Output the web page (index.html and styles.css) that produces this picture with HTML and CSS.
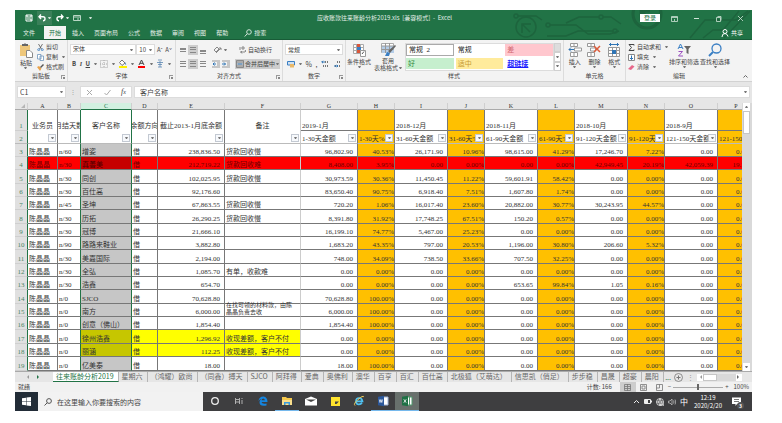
FILE: index.html
```
<!DOCTYPE html>
<html lang="zh-CN">
<head>
  <meta charset="UTF-8">
  <title>应收账款往来账龄分析2019.xls - Excel</title>
  <meta name="viewport" content="width=device-width, initial-scale=1">
  <link rel="stylesheet" href="styles.css">
</head>
<body>
  <header class="topbar">
    <svg class="circuit" width="250" height="29" viewBox="0 0 250 29" fill="none" stroke="#1d643d" stroke-width="1.500">
      <circle cx="14" cy="6" r="2"/><path d="M16 6h18l6 4"/>
      <circle cx="24" cy="17" r="10"/><path d="M20 23v-9h9M20 14l8 8"/>
      <circle cx="46" cy="15" r="2"/><path d="M48 15h26l12 9h22l9-3"/>
      <circle cx="99" cy="7" r="2"/><path d="M97 7H77L64 13M101 7h8l10 7"/>
      <circle cx="113" cy="21" r="2"/><path d="M111 21H76l-12 5H45"/>
      <circle cx="145" cy="4" r="14" stroke-width="3"/><path d="M139 11V1h9M139 1l10 10" stroke-width="3"/>
      <path d="M188 28l15-18h31l12-9M201 28l10-8h10l16-19M222 28l26-27"/>
    </svg>
    <div class="titlebar">
      <div class="quick">
        <button aria-label="保存"><svg width="8" height="8" viewBox="0 0 8 8" fill="none" stroke="#fff"><path d="M1 1h6v6H1zM2 5h4v2M2 1v2h4V1"/></svg></button>
        <button class="undo" aria-label="撤消"><svg width="8" height="8" viewBox="0 0 8 8" fill="none" stroke="#fff" stroke-width="1.4"><path d="M3 .5L1 2.7 3 5M1 2.7h4q2 0 2 2t-2 2"/></svg><i class="caret"></i></button>
        <button aria-label="恢复"><svg width="8" height="8" viewBox="0 0 8 8" fill="none" stroke="#fff" stroke-width="1.4"><path d="M5 .5l2 2.2L5 5M7 2.7H3q-2 0-2 2t2 2"/></svg><i class="caret"></i></button>
        <button aria-label="表单"><svg width="8" height="8" viewBox="0 0 8 8" fill="none" stroke="#b9d6c5"><path d="M.5 1.5h7v5h-7zM.5 3h7M4 5h2"/></svg></button>
        <button class="custom" aria-label="自定义"><i class="caret"></i></button>
      </div>
      <h1>应收账款往来账龄分析2019.xls&nbsp; [兼容模式]&nbsp; -&nbsp; Excel</h1>
      <div class="window-buttons">
        <button class="login">登录</button>
        <button aria-label="功能区"><svg width="7" height="7" viewBox="0 0 7 7" fill="none" stroke="#cfe3d7"><path d="M.5 1.5h6v5h-6zM.5 2.5h6M3.500 6V4" stroke-width=".8"/></svg></button>
        <button aria-label="最小化"><svg width="7" height="7" viewBox="0 0 7 7" stroke="#cfe3d7"><path d="M1 3.5h5"/></svg></button>
        <button aria-label="还原"><svg width="7" height="7" viewBox="0 0 7 7" fill="none" stroke="#cfe3d7"><path d="M1.500 2.500h4v4h-4zM2.500 1.500h3.500v4" stroke-width=".8"/></svg></button>
        <button aria-label="关闭"><svg width="7" height="7" viewBox="0 0 7 7" stroke="#cfe3d7"><path d="M1 1l5 5M6 1L1 6" stroke-width=".8"/></svg></button>
      </div>
    </div>
    <nav class="tabs">
      <a href="#">文件</a>
      <a href="#" class="active">开始</a>
      <a href="#">插入</a>
      <a href="#">页面布局</a>
      <a href="#">公式</a>
      <a href="#">数据</a>
      <a href="#">审阅</a>
      <a href="#">视图</a>
      <a href="#">帮助</a>
      <a href="#" class="find"><svg width="8" height="8" viewBox="0 0 8 8" fill="none" stroke="#cfe3d7"><circle cx="5" cy="3" r="2.300"/><path d="M3.300 4.700L.7 7.500"/></svg>搜索</a>
      <a href="#" class="share"><svg width="8" height="8" viewBox="0 0 8 8" fill="none" stroke="#fff"><circle cx="4" cy="2.500" r="2"/><path d="M1 8q0-3.500 3-3.500 2 0 3 3"/></svg>共享</a>
    </nav>
  </header>

  <section class="ribbon">
    <div class="group clipboard">
      <div class="group-body">
        <button class="big"><svg width="14" height="15" viewBox="0 0 14 15"><path d="M1 2h10v11H1z" fill="#eec77b"/><path d="M3 3V1h2q1-1.500 2 0h2v2z" fill="#666"/><path d="M7.500 7.500h3.500l2.500 2.500v4.500h-6z" fill="#fff" stroke="#888"/></svg>粘贴<i class="caret"></i></button>
        <div class="stack">
          <button><svg width="7" height="7" viewBox="0 0 7 7" fill="none" stroke="#555" stroke-width=".8"><path d="M1.500 0l3 5M5.500 0l-3 5"/><circle cx="1.700" cy="5.700" r="1" stroke="#3a7fc4"/><circle cx="5.300" cy="5.700" r="1" stroke="#3a7fc4"/></svg>剪切</button>
          <button><svg width="7" height="7" viewBox="0 0 7 7" fill="#fff" stroke="#6f95bb" stroke-width=".8"><path d="M.5.5h3.500v4.500H.5zM3 2h3.500v4.500H3z"/></svg>复制<i class="caret"></i></button>
          <button><svg width="7" height="7" viewBox="0 0 7 7"><path d="M0 3l2-1 2.500 2.500L3 7z" fill="#e9a34c"/><path d="M3 3l3-3 1 1-3 3z" fill="#555"/></svg>格式刷</button>
        </div>
      </div>
      <div class="group-name">剪贴板<i class="launcher"></i></div>
    </div>

    <div class="group font">
      <div class="group-body rows">
        <div class="tools">
          <label class="drop face"><select aria-label="字体"><option>宋体</option></select><i class="caret"></i></label>
          <label class="drop size"><select aria-label="字号"><option>10</option></select><i class="caret"></i></label>
          <button class="grow">A<sup>ˆ</sup></button>
          <button class="grow">A<sup>ˇ</sup></button>
        </div>
        <div class="tools spread">
          <button class="bold">B</button>
          <button class="italic">I</button>
          <button class="under">U</button><i class="caret"></i>
          <button aria-label="边框"><svg width="8" height="8" viewBox="0 0 8 8" fill="none" stroke="#aaa" stroke-dasharray="1 1"><path d="M.5.5h7v7h-7zM4 0v8M0 4h8"/></svg></button><i class="caret"></i>
          <button aria-label="填充颜色"><svg width="9" height="9" viewBox="0 0 9 9"><path d="M1.500 3.500L4 1l3 3-3 2.500z" fill="#fff" stroke="#777"/><path d="M7 3l1.300 2.500H7z" fill="#3a7fc4"/><path d="M1 7h8v2H1z" fill="#fff000"/></svg></button><i class="caret"></i>
          <button aria-label="字体颜色"><svg width="9" height="9" viewBox="0 0 9 9"><path d="M2 6l2.500-5L7 6M3 4.300h3" fill="none" stroke="#444"/><path d="M1 7h7v2H1z" fill="red"/></svg></button><i class="caret"></i>
          <button aria-label="拼音"><svg width="8" height="9" viewBox="0 0 8 9" fill="none" stroke="#5b87b3"><path d="M2 1h4M1 3.500h6M4 2v6M2 5.500h4M2 8h4" stroke-width=".8"/></svg></button><i class="caret"></i>
        </div>
      </div>
      <div class="group-name">字体<i class="launcher"></i></div>
    </div>

    <div class="group align">
      <div class="group-body rows">
        <div class="tools">
          <button aria-label="顶端对齐"><i class="lines top"></i></button>
          <button class="on" aria-label="垂直居中"><i class="lines"></i></button>
          <button aria-label="底端对齐"><i class="lines low"></i></button>
          <button class="orient" aria-label="方向"><svg width="9" height="9" viewBox="0 0 9 9" fill="none" stroke="#888"><path d="M1 5l3-3 2 2-3 3zM3 8l5-5M8 5V3H6"/></svg><i class="caret"></i></button>
          <button class="wrap"><svg width="8" height="8" viewBox="0 0 8 8" fill="none" stroke="#888"><path d="M1 1v3M3 1h2v2H3zM1 6h5q1.500-1 0-2M3 5L2 6l1 1.500"/></svg>自动换行</button>
        </div>
        <div class="tools">
          <button aria-label="左对齐"><i class="lines"></i></button>
          <button class="on" aria-label="居中"><i class="lines"></i></button>
          <button aria-label="右对齐"><i class="lines"></i></button>
          <button class="indent" aria-label="减少缩进"><svg width="8" height="8" viewBox="0 0 8 8" fill="none"><path d="M0 1h8M5 3h3M5 5h3M0 7h8" stroke="#999"/><path d="M4 4H1M2.500 2.500L1 4l1.500 1.500" stroke="#2f75b5"/></svg></button>
          <button aria-label="增加缩进"><svg width="8" height="8" viewBox="0 0 8 8" fill="none"><path d="M0 1h8M5 3h3M5 5h3M0 7h8" stroke="#999"/><path d="M0 4h3.500M2 2.500L3.500 4 2 5.500" stroke="#2f75b5"/></svg></button>
          <button class="merge on"><svg width="8" height="8" viewBox="0 0 8 8" fill="none" stroke="#777"><path d="M.5 7.500v-7h7v7zM.5 2h7M.5 6h7" stroke-width=".8"/><path d="M1.500 4h5" stroke="#2f75b5"/></svg>合并后居中<i class="caret"></i></button>
        </div>
      </div>
      <div class="group-name">对齐方式<i class="launcher"></i></div>
    </div>

    <div class="group number">
      <div class="group-body rows">
        <div class="tools">
          <label class="drop format"><select aria-label="数字格式"><option>常规</option></select><i class="caret"></i></label>
        </div>
        <div class="tools spread">
          <button aria-label="会计格式"><svg width="8" height="8" viewBox="0 0 8 8"><path d="M.5 1.500h7V5h-7z" fill="#cfe0f0" stroke="#3a7fc4"/><path d="M3 4h4v3.500H3z" fill="#e9b868"/></svg></button><i class="caret"></i>
          <button class="percent">%</button>
          <button class="percent">,</button>
          <button aria-label="增加小数位"><svg width="8" height="8" viewBox="0 0 8 8" fill="none" stroke="#777"><path d="M4.500 1v2M6.500 1v2M2.500 5v2M4.500 5v2M6.500 5v2"/><path d="M4 2H.7M2 .8L.8 2 2 3.200" stroke="#2f75b5"/></svg></button>
          <button aria-label="减少小数位"><svg width="8" height="8" viewBox="0 0 8 8" fill="none" stroke="#777"><path d="M2.500 5v2M4.500 1v2M6.500 1v2M6.500 5v2"/><path d="M1 6h4M3.800 4.800L5 6 3.800 7.200" stroke="#2f75b5"/></svg></button>
        </div>
      </div>
      <div class="group-name">数字<i class="launcher"></i></div>
    </div>

    <div class="group styles">
      <div class="group-body">
        <button class="big"><svg width="15" height="14" viewBox="0 0 15 14"><path d="M1.500 1.500h10v9h-10zM1.500 4.500h10M1.500 7.500h10M4.500 1v10M8.500 1v10" fill="#fff" stroke="#aaa"/><path d="M5 1h3v3H5zM5 7h3v3H5z" fill="#d9563a"/><path d="M5 4h4v3H5z" fill="#3a7fc4"/><path d="M8.500 7.500h5v6h-5z" fill="#fff" stroke="#999"/><path d="M10 11l2-2.500" stroke="#555"/></svg>条件格式<i class="caret"></i></button>
        <button class="big table-style"><svg width="15" height="14" viewBox="0 0 15 14"><path d="M.5.500h12v9H.5z" fill="#fff" stroke="#aaa"/><path d="M1 3h12v7H1z" fill="#b4cde8"/><path d="M.5 3h12M.5 6.500h12M4.500 0v10M8.500 0v10" stroke="#999"/><path d="M7 8l7-6 1 1-6 7z" fill="#666"/><path d="M4 13l2-4 3 1-1 3z" fill="#3a7fc4"/></svg>套用<span>表格格式<i class="caret"></i></span></button>
        <div class="gallery">
          <button class="picked">常规&nbsp; 2</button>
          <button>常规</button>
          <button class="bad">差</button>
          <button class="good">好</button>
          <button class="neutral">适中</button>
          <button class="link">超链接</button>
        </div>
        <div class="gallery-nav">
          <button class="off" aria-label="上一行"></button>
          <button aria-label="下一行"><i class="caret"></i></button>
          <button aria-label="其他"><i class="caret"></i></button>
        </div>
      </div>
      <div class="group-name">样式</div>
    </div>

    <div class="group cells">
      <div class="group-body">
        <button class="big"><svg width="14" height="14" viewBox="0 0 14 14" fill="#fff" stroke="#999"><path d="M2.500.5h7v3h-7zM6 .5v3M2.500 9.500h7v4h-7zM6 9.500v4M6.500 5h7v3h-7z"/><path d="M6 6.500H1M3 4.500l-2 2 2 2" fill="none" stroke="#2f75b5"/></svg>插入<i class="caret"></i></button>
        <button class="big"><svg width="14" height="14" viewBox="0 0 14 14" fill="#fff" stroke="#999"><path d="M.5.500h7v3h-7zM4 .5v3M.5 9.500h7v4h-7zM4 9.500v4M3.500 5h5v3h-5z"/><path d="M7 3l6 6M13 3L7 9" stroke="#dc5b39" stroke-width="1.500"/></svg>删除<i class="caret"></i></button>
        <button class="big"><svg width="14" height="14" viewBox="0 0 14 14" fill="#fff" stroke="#999"><path d="M1.500 4.500h11v9h-11zM1.500 7.500h11M1.500 10.500h11M5.500 4v10M9.500 4v10"/><path d="M5 7h4v4H5z" fill="#2f75b5" stroke="none"/><path d="M2 1.500h10M3.500 0v3M10.500 0v3" stroke="#2f75b5"/></svg>格式<i class="caret"></i></button>
      </div>
      <div class="group-name">单元格</div>
    </div>

    <div class="group edit">
      <div class="group-body">
        <div class="stack">
          <button><svg width="7" height="7" viewBox="0 0 7 7" fill="none" stroke="#444"><path d="M6 1.500v-1H1l2.500 3L1 6.500h5v-1"/></svg>自动求和<i class="caret"></i></button>
          <button><svg width="7" height="7" viewBox="0 0 7 7" fill="#fff" stroke="#888"><path d="M.5.500h6v6h-6z"/><path d="M3.500 1.500v4M2 4l1.500 1.500L5 4" stroke="#2f75b5"/></svg>填充<i class="caret"></i></button>
          <button><svg width="7" height="7" viewBox="0 0 7 7"><path d="M0 5l4-4 2.500 1.500L3 6z" fill="#e8688a"/></svg>清除<i class="caret"></i></button>
        </div>
        <button class="big"><svg width="14" height="14" viewBox="0 0 14 14" fill="none"><path d="M1 6l2.500-5L6 6M2 4.500h3" stroke="#3a7fc4"/><path d="M1.500 8.500h4l-4 4.500h4.500" stroke="#9b4fc0"/><path d="M7 3h7l-2.500 3v5l-2-1V6z" fill="#666"/></svg>排序和筛选<i class="caret"></i></button>
        <button class="big"><svg width="14" height="14" viewBox="0 0 14 14" fill="none" stroke="#3a7fc4"><circle cx="8.500" cy="5.500" r="4.500" stroke-width="1.300"/><path d="M5 9l-4 4" stroke-width="2"/></svg>查找和选择<i class="caret"></i></button>
      </div>
      <div class="group-name">编辑<button class="collapse" aria-label="折叠功能区"><svg width="5" height="3" viewBox="0 0 5 3" fill="none" stroke="#666"><path d="M.5 2.500l2-2 2 2"/></svg></button></div>
    </div>
  </section>

  <section class="formula-bar">
    <label class="drop name-box"><input type="text" value="C1" aria-label="名称框"><i class="caret"></i></label>
    <i class="grip">⋮</i>
    <div class="formula-buttons">
      <button aria-label="取消"><svg width="7" height="7" viewBox="0 0 7 7" stroke="#aaa"><path d="M1 1l5 5M6 1L1 6"/></svg></button>
      <button aria-label="输入"><svg width="7" height="7" viewBox="0 0 7 7" fill="none" stroke="#aaa"><path d="M.5 4l2 2 4-5"/></svg></button>
      <button class="fx">f<sub>x</sub></button>
    </div>
    <label class="drop formula"><input type="text" value="客户名称" aria-label="编辑栏"><i class="caret"></i></label>
  </section>

  <main class="workspace">
    <div class="sheet">
      <table>
        <colgroup id="cols"></colgroup>
        <thead id="head"></thead>
        <tbody id="rows"></tbody>
      </table>
    </div>
    <div class="vscroll">
      <button aria-label="向上滚动"><i class="caret up"></i></button>
      <div class="thumb"></div>
      <button class="down" aria-label="向下滚动"><i class="caret"></i></button>
    </div>
  </main>

  <nav class="sheet-tabs">
    <div class="arrows"><i class="left"></i><i class="right"></i></div>
    <div class="sheet-list" id="sheetList"></div>
    <span class="more">...</span>
    <button class="add" aria-label="新工作表"><svg width="9" height="9" viewBox="0 0 9 9" fill="none" stroke="#777"><circle cx="4.500" cy="4.500" r="4" stroke-width=".8"/><path d="M2.500 4.500h4M4.500 2.500v4"/></svg></button>
    <i class="grip">⋮</i>
    <div class="hscroll">
      <button aria-label="向左滚动"><i class="left"></i></button>
      <div class="thumb"></div>
      <button class="end" aria-label="向右滚动"><i class="right"></i></button>
    </div>
  </nav>

  <div class="status">
    <span>就绪</span>
    <span class="count">计数: 166</span>
    <button class="on" aria-label="普通"><svg width="7" height="7" viewBox="0 0 7 7" fill="none" stroke="#777"><path d="M.5.500h6v6h-6zM.5 2.500h6M.5 4.500h6M3.500 0v7" stroke-width=".8"/></svg></button>
    <button aria-label="页面布局"><svg width="7" height="7" viewBox="0 0 7 7" fill="none" stroke="#777"><path d="M.5.500h6v6h-6zM2 2h3v3H2z" stroke-width=".8"/></svg></button>
    <button aria-label="分页预览"><svg width="7" height="7" viewBox="0 0 7 7" fill="none" stroke="#777"><path d="M.5.500h6v6h-6zM.5 4h3V.5" stroke-width=".8"/></svg></button>
    <div class="zoom">
      <button aria-label="缩小">−</button>
      <input type="range" min="0" max="100" value="50" aria-label="显示比例">
      <button aria-label="放大">+</button>
      <span>100%</span>
    </div>
  </div>

  <footer class="taskbar">
    <button class="start" aria-label="开始"><svg width="9" height="9" viewBox="0 0 9 9" fill="#fff"><path d="M0 1.200L4 .7v3.500H0zM4.500.6L9 0v4.200H4.500zM0 4.800h4v3.500L0 7.800zM4.500 4.800H9V9l-4.500-.6z"/></svg></button>
    <label class="search">
      <svg width="8" height="8" viewBox="0 0 8 8" fill="none" stroke="#555"><circle cx="5" cy="3" r="2.400"/><path d="M3.300 4.700L.5 7.500"/></svg>
      <input type="text" placeholder="在这里输入你要搜索的内容">
    </label>
    <div class="apps">
      <button aria-label="Cortana"><svg width="12" height="12" viewBox="0 0 12 12" fill="none" stroke="#eee" stroke-width="1.300"><circle cx="6" cy="6" r="3.300"/></svg></button>
      <button aria-label="任务视图"><svg width="12" height="12" viewBox="0 0 12 12" fill="none" stroke="#ccc" stroke-width=".8"><path d="M2.500 3v1.500h4V3M2.500 9V7h4v2M2.500 4.500V7M6.500 4.500V7M9 3v1M9 5v4"/></svg></button>
      <button aria-label="Edge"><svg width="12" height="12" viewBox="0 0 12 12"><path d="M1.500 6Q2 1.500 6.500 1.500q4 .5 4 5.500H4.500q.5 2.500 5 1.500v2q-7 1.500-7-3.500 0-2 2-3Q2.500 4 1.500 6zM4.500 5.300h3.500Q7.500 3.500 6.200 3.500t-1.700 1.800z" fill="#1585e0"/></svg></button>
      <button class="open" aria-label="文件资源管理器"><svg width="12" height="12" viewBox="0 0 12 12"><path d="M1 2h4l1 1h5v7H1z" fill="#f5c84c"/><path d="M1 5h10v5H1z" fill="#fbdf8d"/><path d="M3 7h6v3H7.500V8.500h-3V10H3z" fill="#3a9bdc"/></svg></button>
      <button aria-label="邮件"><svg width="12" height="12" viewBox="0 0 12 12"><path d="M0 4l6-2.500L12 4v6.500H0z" fill="#fff"/><path d="M1 4.500h10L6 7z" fill="#444"/></svg></button>
      <button aria-label="便笺"><svg width="12" height="12" viewBox="0 0 12 12"><path d="M2 2h9v9H2z" fill="#ffe32e"/><path d="M6 6.500h4L7.500 9H6z" fill="#444"/></svg></button>
      <button aria-label="Internet Explorer"><svg width="12" height="12" viewBox="0 0 12 12" fill="none"><path d="M3 6.300h6.500Q9 3 6 3T3 6.300t3 3q2 0 3-1.500" stroke="#4fc0f0" stroke-width="1.700"/><path d="M2 10.500Q0 9 5 4.500T11 2" stroke="#f3d15a"/></svg></button>
      <button class="open" aria-label="Word"><svg width="12" height="12" viewBox="0 0 12 12"><path d="M6 2h5v8H6z" fill="#fff" stroke="#9fb4d8"/><path d="M1 1.800l6-1v10.400l-6-1z" fill="#2b579a"/><path d="M2.300 4.500l.7 3 .9-3 .9 3 .7-3" fill="none" stroke="#fff" stroke-width=".7"/></svg></button>
      <button class="open current" aria-label="Excel"><svg width="12" height="12" viewBox="0 0 12 12"><path d="M6 2h5v8H6zM8.500 2v8" fill="#fff" stroke="#4f9b6d"/><path d="M1 1.800l6-1v10.400l-6-1z" fill="#1e7145"/><path d="M2.800 4.300l2.400 3.400M5.200 4.300L2.800 7.700" stroke="#fff" stroke-width=".8"/></svg></button>
    </div>
    <div class="tray">
      <svg width="7" height="7" viewBox="0 0 7 7" fill="none" stroke="#eee"><path d="M1 5l2.500-2.500L6 5"/></svg>
      <svg width="8" height="7" viewBox="0 0 8 7" fill="none" stroke="#eee"><path d="M.5 1.500h6v4h-6z"/><path d="M1 3.500h3" stroke-width="3"/><path d="M7.500 2.500v2"/></svg>
      <svg width="8" height="8" viewBox="0 0 8 8" fill="none" stroke="#eee" stroke-width=".8"><circle cx="4" cy="4" r="3.500"/><path d="M.5 4h7M4 .5q-3 3.500 0 7M4 .5q3 3.500 0 7M5 6h3v2H5z"/></svg>
      <svg width="8" height="8" viewBox="0 0 8 8" fill="none" stroke="#bbb" stroke-width=".8"><path d="M.5 3h1.500l2-2v6L2 5H.5zM5.500 2.500q1 1.500 0 3M7 1.500q1.500 2.500 0 5"/></svg>
      <span class="ime">中</span>
      <time>12:19<br>2020/2/20</time>
      <button class="notice" aria-label="3 条新通知"><svg width="9" height="9" viewBox="0 0 9 9"><path d="M0 .5h9v6.500H5L3.500 9V7H0z" fill="#fff"/><path d="M2 2.500h5M2 4.500h5" stroke="#555" stroke-width=".8"/></svg><b>3</b></button>
    </div>
  </footer>

  <script src="script.js"></script>
</body>
</html>
```
FILE: styles.css
```
:root {
  --green: #217346;
  --ribbon: #f3f3f3;
  --chrome: #e6e6e6;
  --line: #777;
  --orange: #ffc000;
  --sans: "Noto Sans CJK SC", sans-serif;
  --serif: "Liberation Serif", "Noto Sans CJK SC", serif;
}

* {
  margin: 0;
  padding: 0;
  box-sizing: border-box;
}

body {
  font-family: var(--sans);
  font-size: 6px;
  line-height: 8px;
  color: #444;
  background: white;
  height: 100vh;
  padding: 10px 30px 12px 15px;
  display: flex;
  flex-direction: column;
  overflow: hidden;
}

button, input, select {
  font: inherit;
  color: inherit;
  border: none;
  background: none;
  border-radius: 0;
  outline: none;
  appearance: none;
}

button {
  display: flex;
  align-items: center;
  justify-content: center;
  white-space: nowrap;
}

svg {
  display: block;
  flex-shrink: 0;
}

a {
  color: inherit;
  text-decoration: none;
}

.caret {
  display: block;
  flex-shrink: 0;
  border: 1px solid transparent;
  border-top: 2px solid #777;
  border-bottom: none;
  width: 3px;
}

.caret.up {
  transform: rotate(180deg);
}

/* title bar and tabs */
.topbar {
  position: relative;
  background: var(--green);
  color: #e4efe8;
  border-bottom: 1px solid #185c37;
}

.circuit {
  position: absolute;
  top: 0;
  right: 0;
}

.titlebar,
.tabs {
  position: relative;
  display: flex;
}

.titlebar {
  height: 16px;
  align-items: center;
  justify-content: space-between;
}

.quick {
  display: flex;
  align-items: center;
  flex: 1;
  padding-left: 10px;
  gap: 4px;
}

.quick button {
  gap: 2px;
  height: 14px;
}

.quick .undo {
  background: #3a8059;
  padding: 0 1px;
}

.quick .custom {
  margin-left: 4px;
}

.quick .caret {
  border-top-color: #cfe3d7;
}

.titlebar h1 {
  font-size: 6px;
  font-weight: 400;
}

.window-buttons {
  display: flex;
  flex: 1;
  justify-content: flex-end;
  align-items: center;
  gap: 15px;
  padding-right: 8px;
}

.login {
  background: white;
  color: var(--green);
  width: 20px;
  height: 8px;
  margin-right: -4px;
}

.tabs {
  height: 13px;
  padding-left: 3px;
}

.tabs a {
  padding: 0 5px;
  line-height: 13px;
}

.tabs .active {
  background: var(--ribbon);
  color: var(--green);
  margin: 0 1px 0 4px;
}

.tabs .find,
.tabs .share {
  display: flex;
  align-items: center;
  gap: 2px;
}

.tabs .find {
  margin-left: 6px;
}

.tabs .share {
  margin-left: auto;
  padding-right: 9px;
  color: white;
}

/* ribbon */
.ribbon {
  display: flex;
  height: 42px;
  background: var(--ribbon);
  border-bottom: 1px solid #d2d2d2;
  flex-shrink: 0;
}

.group {
  display: flex;
  flex-direction: column;
  border-right: 1px solid #dcdcdc;
  padding: 3px 2px 0;
  flex-shrink: 0;
}

.clipboard { width: 53px; }
.font { width: 108px; }
.align { width: 107px; }
.number { width: 63px; }
.styles { width: 218px; }
.cells { width: 62px; }

.edit {
  flex: 1;
  border-right: none;
}

.group-body {
  flex: 1;
  display: flex;
  gap: 2px;
}

.group-body.rows {
  flex-direction: column;
  gap: 3px;
  padding-top: 1px;
}

.group-name {
  position: relative;
  text-align: center;
  height: 9px;
  line-height: 8px;
}

.launcher {
  position: absolute;
  right: 0;
  bottom: 2px;
  width: 4px;
  height: 4px;
  border-left: 1px solid #999;
  border-top: 1px solid #999;
}

.launcher::after {
  content: "";
  position: absolute;
  right: 0;
  bottom: 0;
  width: 2px;
  height: 2px;
  background: #888;
}

.big {
  flex-direction: column;
  justify-content: flex-start;
  gap: 1px;
  line-height: 7px;
}

.clipboard .big {
  width: 19px;
}

.big span {
  display: flex;
  align-items: center;
  gap: 1px;
}

.big.table-style {
  gap: 0;
}

.stack {
  display: flex;
  flex-direction: column;
  gap: 2px;
}

.stack button {
  gap: 2px;
  height: 8px;
  justify-content: flex-start;
}

.stack .caret {
  margin-left: 2px;
}

.tools {
  display: flex;
  align-items: center;
  height: 11px;
}

.tools.spread {
  justify-content: space-between;
  padding: 0 2px;
}

.drop {
  display: flex;
  align-items: center;
  background: white;
  border: 1px solid #dcdcdc;
  height: 11px;
  padding: 0 2px;
}

.drop select,
.drop input {
  flex: 1;
  min-width: 0;
  height: 9px;
  line-height: 9px;
}

.face {
  width: 67px;
  font-family: var(--serif);
}

.size {
  width: 19px;
}

.grow {
  width: 9px;
}

.grow sup {
  font-size: 5px;
  line-height: 4px;
}

.bold { font-weight: 700; }

.italic {
  font-family: var(--serif);
  font-style: italic;
  font-weight: 700;
}

.under {
  text-decoration: underline;
  font-weight: 700;
}

.align .tools button {
  height: 10px;
}

.align .on {
  background: #cdcdcd;
}

.lines {
  display: block;
  width: 6px;
  height: 6px;
  margin: 0 2px;
  border-top: 1px solid #888;
  border-bottom: 1px solid #888;
  background: linear-gradient(#888, #888) center / 6px 1px no-repeat;
}

.lines.top {
  height: 4px;
}

.lines.low {
  height: 4px;
  margin-top: 4px;
}

.orient {
  gap: 2px;
  margin-left: 5px;
}

.wrap {
  gap: 1px;
  margin-left: 12px;
}

.indent {
  margin: 0 2px 0 4px;
}

.merge {
  margin-left: 5px;
  padding: 0 1px;
  gap: 1px;
}

.format {
  flex: 1;
}

.percent {
  font-size: 7px;
}

.styles .group-body {
  gap: 3px;
}

.styles {
  padding-left: 1px;
}

.gallery {
  flex: 1;
  display: grid;
  grid-template-columns: repeat(3, 1fr);
  grid-template-rows: 12px 11px;
  gap: 2px;
  background: white;
  border: 1px solid #dcdcdc;
  height: 28px;
  font-family: var(--serif);
  font-size: 7px;
}

.gallery button {
  justify-content: flex-start;
  padding: 0 2px;
  color: #222;
}

.gallery .picked { border: 1px solid #aaa; }
.gallery .bad { background: #ffc7ce; color: #d1666f; }
.gallery .good { background: #c6efce; color: #2f8a3e; }
.gallery .neutral { background: #ffeb9c; color: #c79a35; }

.gallery .link {
  color: #1a1aff;
  font-weight: 700;
  text-decoration: underline;
}

.gallery-nav {
  width: 7px;
  height: 28px;
  margin-left: -3px;
  display: grid;
  grid-template-rows: repeat(3, 1fr);
}

.gallery-nav button {
  border: 1px solid #d0d0d0;
  background: white;
}

.gallery-nav .off {
  background: #ddd;
}

.cells .group-body {
  justify-content: space-around;
}

.edit .group-body {
  gap: 1px;
}

.edit .group-name {
  padding-right: 20px;
}

.collapse {
  position: absolute;
  right: 2px;
  bottom: 3px;
}

/* formula bar */
.formula-bar {
  display: flex;
  align-items: center;
  background: var(--chrome);
  padding: 4px 2px 5px;
  flex-shrink: 0;
}

.formula-bar .drop {
  height: 12px;
  font-size: 7px;
}

.name-box {
  width: 49px;
}

.grip {
  font-style: normal;
  color: #999;
  width: 14px;
  text-align: center;
}

.formula-buttons {
  display: flex;
  align-items: center;
  justify-content: space-around;
  width: 52px;
  height: 12px;
  background: white;
  border: 1px solid #dcdcdc;
  margin-right: 2px;
}

.fx {
  font-family: var(--serif);
  font-style: italic;
  font-size: 8px;
}

.fx sub {
  font-size: 6px;
}

.formula {
  flex: 1;
}

.formula input {
  padding-left: 3px;
}

/* worksheet */
.workspace {
  display: flex;
  flex: 1;
  min-height: 0;
}

.sheet {
  flex: 1;
  min-width: 0;
  overflow: hidden;
}

table {
  table-layout: fixed;
  width: 740px;
  border-collapse: separate;
  border-spacing: 0;
  font-family: var(--serif);
  font-size: 7px;
  line-height: 7px;
  color: #333;
}

th, td {
  position: relative;
  font-weight: 400;
  white-space: nowrap;
  overflow: hidden;
  vertical-align: bottom;
  border-right: 1px solid var(--line);
  border-bottom: 1px solid var(--line);
}

.letters th {
  height: 7px;
  line-height: 6px;
  font-size: 6px;
  background: var(--chrome);
  border-right-color: #cfcfcf;
  border-bottom-color: #aaa;
}

.letters .picked {
  background: #d2f0e0;
  color: var(--green);
  border-bottom-color: var(--green);
}

.letters .corner::after {
  content: "";
  position: absolute;
  right: 2px;
  bottom: 1px;
  border: 2px solid transparent;
  border-right-color: #b5b5b5;
  border-bottom-color: #b5b5b5;
}

.row-no {
  text-align: center;
  background: #e0e0e0;
  color: #4c8566;
  border-right-color: var(--green);
  border-bottom-color: #cfcfcf;
}

.periods th {
  height: 21px;
  text-align: left;
  padding-left: 1px;
}

.periods .row-no,
.ages .row-no {
  text-align: center;
  padding: 0;
}

.periods .tall {
  text-align: center;
  vertical-align: middle;
  padding: 0;
  border-bottom-color: #bbb;
}

.tall span {
  display: flex;
  justify-content: center;
}

.ages th {
  height: 13px;
  text-align: left;
  padding-left: 1px;
  border-bottom-color: #bbb;
}

.filter {
  position: absolute;
  right: 1px;
  bottom: 1px;
  width: 8px;
  height: 8px;
  background: #f7f9fc;
  border: 1px solid #c3c9d2;
}

tbody tr {
  height: 13px;
}

tbody tr:nth-child(3n),
tbody tr:last-child {
  height: 14px;
}

td {
  padding-left: 1px;
}

td.num {
  text-align: right;
  padding-right: 4px;
}

td.share-cell {
  text-align: right;
  padding-right: 0;
}

.share-cell {
  background: var(--orange);
}

tbody .note,
.tall.note {
  border-right-color: #ccc;
}

.note span {
  position: absolute;
  left: 1px;
  right: 0;
  bottom: 0;
  line-height: 7px;
}

/* wrapped note, grows upwards out of its row */
.note .long {
  font-size: 6px;
  white-space: normal;
  right: 6px;
}

td.note {
  overflow: visible;
}

td.customer {
  background: #c6c6c6;
}

th.customer,
td.customer,
.days {
  border-right-color: var(--green);
}

.overdue td {
  background: red;
  color: #6e0000;
}

.overdue td.customer {
  background: #c60000;
  color: #4a0000;
}

.unpaid td.customer {
  background: #c6c600;
}

.unpaid .side,
.unpaid .balance,
.unpaid .note {
  background: yellow;
}

.vscroll {
  display: flex;
  flex-direction: column;
  width: 10px;
  padding: 0 2px 0 1px;
  background: #d9d9d9;
}

.vscroll button {
  height: 8px;
  background: white;
}

.vscroll .thumb {
  height: 23px;
  background: white;
  border: 1px solid #c6c6c6;
}

.vscroll .down {
  margin-top: auto;
}

/* sheet tabs */
.sheet-tabs {
  display: flex;
  align-items: center;
  height: 11px;
  background: var(--chrome);
  border-top: 1px solid #aaa;
  font-size: 7px;
  color: #666;
  flex-shrink: 0;
}

.arrows {
  display: flex;
  gap: 8px;
  width: 38px;
  padding-left: 10px;
  flex-shrink: 0;
}

.left,
.right {
  border: 2px solid transparent;
}

.left {
  border-right-color: #999;
}

.right {
  border-left-color: var(--green);
}

.sheet-list {
  display: flex;
  flex: 1;
  min-width: 0;
  overflow: hidden;
}

.sheet-list a {
  flex-shrink: 0;
  padding: 0 4px 0 3px;
  line-height: 9px;
  border-right: 1px solid #b5b5b5;
}

.sheet-list .active {
  background: white;
  color: var(--green);
  border-bottom: 1px solid var(--green);
}

.more {
  color: var(--green);
  padding: 0 3px 0 1px;
}

.hscroll {
  display: flex;
  align-items: center;
  width: 45px;
  height: 7px;
  margin-right: 10px;
  background: #d9d9d9;
}

.hscroll button {
  width: 6px;
  height: 7px;
  background: white;
}

.hscroll .right {
  border-left-color: #666;
}

.hscroll .thumb {
  width: 14px;
  height: 7px;
  background: white;
  border: 1px solid #c6c6c6;
}

.hscroll .end {
  margin-left: auto;
}

/* status bar */
.status {
  display: flex;
  align-items: center;
  height: 10px;
  padding: 0 3px;
  background: #f1f1f1;
  flex-shrink: 0;
}

.count {
  margin-left: auto;
  padding-right: 8px;
}

.status > button {
  width: 16px;
  height: 10px;
}

.status .on {
  background: #cdcdcd;
}

.zoom {
  display: flex;
  align-items: center;
  gap: 2px;
}

.zoom input {
  width: 50px;
  height: 6px;
  background: linear-gradient(#aaa, #aaa) center / 100% 1px no-repeat;
}

.zoom input::-webkit-slider-thumb {
  appearance: none;
  width: 2px;
  height: 6px;
  background: #666;
}

.zoom span {
  padding-left: 3px;
}

/* taskbar */
.taskbar {
  display: flex;
  height: 19px;
  background: #3e3e40;
  color: white;
  flex-shrink: 0;
}

.start {
  width: 23px;
  background: #222c37;
}

.search {
  display: flex;
  align-items: center;
  gap: 5px;
  width: 165px;
  padding-left: 6px;
  background: #f2f2f2;
  color: #444;
  font-size: 7px;
}

.search input {
  flex: 1;
  min-width: 0;
}

.search input::placeholder {
  color: #444;
  opacity: 1;
}

.apps {
  display: flex;
}

.apps button {
  width: 24px;
  border-bottom: 1px solid transparent;
}

.apps .open {
  border-bottom-color: #76b9ed;
}

.apps .current {
  background: #68706c;
}

.tray {
  display: flex;
  align-items: center;
  gap: 4px;
  margin-left: auto;
  padding-right: 11px;
}

.ime {
  font-size: 8px;
}

time {
  text-align: center;
  padding: 0 6px 0 2px;
}

.notice {
  position: relative;
}

.notice b {
  position: absolute;
  right: -3px;
  bottom: -3px;
  width: 7px;
  height: 7px;
  font-size: 5px;
  line-height: 7px;
  border-radius: 50%;
  background: #555;
}
```
FILE: script.js
```
const widths = [13, 30, 23, 51, 26, 67, 76, 57, 37, 53, 37, 53, 37, 53, 37, 53, 37];
const letters = "ABCDEFGHIJKLMNOP".split("");
const classes = ["clerk", "days", "customer", "side", "balance num", "note"];

const titles = ["业务员", "月结天数", "客户名称", "余额方向", "截止2013-1月底余额", "备注"];
const periods = ["2019-1月", "2018-12月", "2018-11月", "2018-10月", "2018-9月"];
const ages = ["1-30天", "31-60天", "61-90天", "91-120天", "121-150天"];

// terms, customer, balance, note, then amount / share for each period
const z = ["0.00", "0.00%"];
const data = [
  ["n/60", "增姿", "238,836.50", "货款回收慢", "96,802.90", "40.53%", "26,171.90", "10.96%", "98,615.00", "41.29%", "17,246.70", "7.22%", ...z],
  ["n/30", "真善美", "212,719.22", "货款回收难", "8,408.00", "3.95%", ...z, ...z, "42,949.45", "20.19%", "42,059.39", "19.77%"],
  ["n/30", "同创", "102,025.95", "货款回收慢", "30,973.59", "30.36%", "11,450.45", "11.22%", "59,601.91", "58.42%", ...z, ...z],
  ["n/30", "百仕高", "92,176.60", "", "83,650.40", "90.75%", "6,918.40", "7.51%", "1,607.80", "1.74%", ...z, ...z],
  ["n/45", "圣坤", "67,863.55", "货款回收慢", "720.20", "1.06%", "16,017.40", "23.60%", "20,882.00", "30.77%", "30,243.95", "44.57%", ...z],
  ["n/30", "历拓", "26,290.25", "货款回收慢", "8,391.80", "31.92%", "17,748.25", "67.51%", "150.20", "0.57%", ...z, ...z],
  ["n/30", "冠博", "21,666.10", "", "16,199.10", "74.77%", "5,467.00", "25.23%", ...z, ...z, ...z],
  ["n/90", "路路来鞋业", "3,882.80", "", "1,683.20", "43.35%", "797.00", "20.53%", "1,196.00", "30.80%", "206.60", "5.32%", ...z],
  ["n/30", "美嘉国际", "2,194.00", "", "748.00", "34.09%", "738.50", "33.66%", "707.50", "32.25%", ...z, ...z],
  ["n/30", "全弘", "1,085.70", "有单，收款难", ...z, ...z, ...z, ...z, ...z],
  ["n/30", "浩鑫", "654.70", "", ...z, ...z, "653.65", "99.84%", "1.05", "0.16%", ...z],
  ["n/0", "SJCO", "70,628.80", "", "70,628.80", "100.00%", ...z, ...z, ...z, ...z],
  ["n/0", "南方", "6,000.00", "在找可领的材料款，由陈晶晶负责去收", "6,000.00", "100.00%", ...z, ...z, ...z, ...z],
  ["n/0", "创意（佛山）", "1,854.40", "", "1,854.40", "100.00%", ...z, ...z, ...z, ...z],
  ["n/0", "徐州浩鑫", "1,296.92", "收现差额，客户不付", ...z, ...z, ...z, ...z, ...z],
  ["n/0", "丽涵", "112.25", "收现差额，客户不付", ...z, ...z, ...z, ...z, ...z],
  ["n/0", "亿美泰", "18.00", "", "18.00", "100.00%", ...z, ...z, ...z, ...z]
];
const rowClass = { 4: "overdue", 17: "unpaid", 18: "unpaid" };

const sheets = ["往来账龄分析2019", "星期六", "（鸿耀）欧尚", "（同鑫）搏天", "SJCO", "阿拜得", "爱典", "奥佛利", "澳华",
  "百亨", "百汇", "百仕高", "北极狐（艾萌达）", "信思凯（俏足）", "步步稳", "昌晟", "超豪", "晨阳", "丿"];

const filter = '<button class="filter" aria-label="筛选"><i class="caret"></i></button>';

document.getElementById("cols").innerHTML = widths.map(w => `<col style="width:${w}px">`).join("");

document.getElementById("head").innerHTML =
  '<tr class="letters"><th class="corner"></th>' +
  letters.map(l => `<th class="${l === "C" ? "picked" : ""}">${l}</th>`).join("") + "</tr>" +
  '<tr class="periods"><th class="row-no">1</th>' +
  titles.map((t, i) => `<th rowspan="2" class="tall ${classes[i].split(" ")[0]}">${i === 5 ? t : `<span>${t}</span>`}${filter}</th>`).join("") +
  periods.map(p => `<th>${p}</th><th class="share-cell"></th>`).join("") + "</tr>" +
  '<tr class="ages"><th class="row-no">2</th>' +
  ages.map(a => `<th>${a}金额${filter}</th><th class="share-cell">${a}%${filter}</th>`).join("") + "</tr>";

document.getElementById("rows").innerHTML = data.map((row, i) => {
  const [terms, customer, balance, note, ...amounts] = row;
  const noteClass = note.length > 10 ? "long" : "";
  const first = ["陈晶晶", terms, customer, "借", balance, `<span class="${noteClass}">${note}</span>`];
  return `<tr class="${rowClass[i + 3] || ""}"><th class="row-no">${i + 3}</th>` +
    first.map((v, n) => `<td class="${classes[n]}">${v}</td>`).join("") +
    amounts.map((v, n) => `<td class="${n % 2 ? "share-cell" : "num"}">${v}</td>`).join("") + "</tr>";
}).join("");

document.getElementById("sheetList").innerHTML =
  sheets.map((s, i) => `<a href="#" class="${i ? "" : "active"}">${s}</a>`).join("");
```
